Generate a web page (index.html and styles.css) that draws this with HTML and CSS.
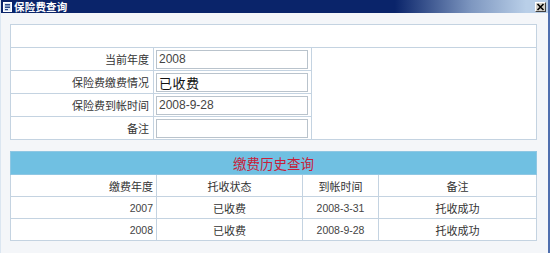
FILE: index.html
```html
<!DOCTYPE html>
<html lang="zh">
<head>
<meta charset="utf-8">
<title>保险费查询</title>
<link rel="stylesheet" href="styles.css">
</head>
<body>
<div class="window">
  <div class="titlebar">
    <svg class="ticon" width="9" height="10" viewBox="0 0 9 10">
      <rect x="0.5" y="0.5" width="8" height="9" fill="#dce8f6" stroke="#ffffff"/>
      <rect x="2" y="2" width="5" height="1.5" fill="#2a4a8a"/>
      <rect x="2" y="4.5" width="5" height="1.5" fill="#2a4a8a"/>
      <rect x="2" y="7" width="3" height="1.2" fill="#2a4a8a"/>
    </svg>
    <span class="title">保险费查询</span>
    <span class="close">
      <svg width="9" height="8" viewBox="0 0 9 8"><path d="M1.5 1 L7.5 7 M7.5 1 L1.5 7" stroke="#000" stroke-width="1.6"/></svg>
    </span>
  </div>
  <div class="content">
    <table class="panel">
      <colgroup><col class="pc1"><col class="pc2"><col class="pc3"></colgroup>
      <tr class="blank"><td colspan="3"></td></tr>
      <tr>
        <td class="lbl">当前年度</td>
        <td class="fld"><div class="box">2008</div></td>
        <td class="side" rowspan="4"></td>
      </tr>
      <tr>
        <td class="lbl">保险费缴费情况</td>
        <td class="fld"><div class="box big">已收费</div></td>
      </tr>
      <tr>
        <td class="lbl">保险费到帐时间</td>
        <td class="fld"><div class="box">2008-9-28</div></td>
      </tr>
      <tr>
        <td class="lbl">备注</td>
        <td class="fld"><div class="box"></div></td>
      </tr>
    </table>

    <table class="history">
      <colgroup><col class="hc1"><col class="hc2"><col class="hc3"><col class="hc4"></colgroup>
      <tr><th class="cap" colspan="4">缴费历史查询</th></tr>
      <tr class="head">
        <td class="c1">缴费年度</td>
        <td>托收状态</td>
        <td>到帐时间</td>
        <td>备注</td>
      </tr>
      <tr>
        <td class="c1 num">2007</td>
        <td>已收费</td>
        <td class="num">2008-3-31</td>
        <td>托收成功</td>
      </tr>
      <tr>
        <td class="c1 num">2008</td>
        <td>已收费</td>
        <td class="num">2008-9-28</td>
        <td>托收成功</td>
      </tr>
    </table>
  </div>
</div>
</body>
</html>
```
FILE: styles.css
```css
html, body {
  margin: 0;
  padding: 0;
}
body {
  width: 550px;
  height: 253px;
  overflow: hidden;
  background: #f4f6f9;
  font-family: "Noto Sans CJK SC", "Liberation Sans", sans-serif;
  color: #333;
}
.window {
  width: 550px;
  height: 253px;
  box-sizing: border-box;
  display: flex;
  flex-direction: column;
  border-right: 2px solid #4f6fae;
  border-left: 1px solid #dbe6f1;
}
.titlebar {
  height: 13px;
  display: flex;
  align-items: center;
  padding-left: 2px;
  background: linear-gradient(to right, #0a246a 0%, #0a246a 72%, #7e97c0 86%, #b9cfe8 96%, #b9cfe8 100%);
}
.ticon {
  display: block;
  flex: none;
}
.title {
  color: #fff;
  font-weight: bold;
  font-size: 10.5px;
  line-height: 13px;
  margin-left: 2px;
  letter-spacing: 0.2px;
}
.close {
  margin-left: auto;
  margin-right: 2px;
  width: 11px;
  height: 10px;
  box-sizing: border-box;
  background: #d4d0c8;
  border: 1px solid;
  border-color: #fff #404040 #404040 #fff;
  display: flex;
  align-items: center;
  justify-content: center;
}
.close svg { display: block; }
.content {
  padding: 11px 0 0 9px;
}
table {
  border-collapse: collapse;
  table-layout: fixed;
  width: 526px;
  background: #fff;
}
td, th {
  border: 1px solid #c4d3e1;
  padding: 0;
}
.pc1 { width: 143px; }
.pc2 { width: 158px; }
.pc3 { width: 225px; }
.panel .blank td {
  height: 22px;
}
.panel tr { height: 23px; }
.lbl {
  text-align: right;
  padding-right: 4px;
  font-size: 11px;
  color: #333;
}
.fld {
  padding: 0 3px 0 2px;
}
.box {
  height: 19px;
  box-sizing: border-box;
  border: 1px solid #b9c3cc;
  background: #fff;
  font-family: "Liberation Sans", "Noto Sans CJK SC", sans-serif;
  font-size: 12px;
  line-height: 17px;
  padding-left: 2px;
  color: #444;
}
.box.big {
  font-family: "Noto Sans CJK SC", sans-serif;
  font-size: 13px;
  color: #111;
  letter-spacing: 0.5px;
}

.hc1 { width: 146px; }
.hc2 { width: 146px; }
.hc3 { width: 76px; }
.hc4 { width: 158px; }
.history {
  margin-top: 11px;
}
.history .cap {
  height: 22px;
  background: #70c0e2;
  color: #c8203a;
  font-weight: normal;
  font-size: 13.5px;
  text-align: center;
  border-color: #8fc7e3;
}
.history tr { height: 22px; }
.history td {
  font-size: 11px;
  text-align: center;
  color: #333;
}
.history .c1 { text-align: right; padding-right: 3px; }
.history .num {
  font-family: "Liberation Sans", sans-serif;
  font-size: 10.5px;
  color: #444;
}
```
